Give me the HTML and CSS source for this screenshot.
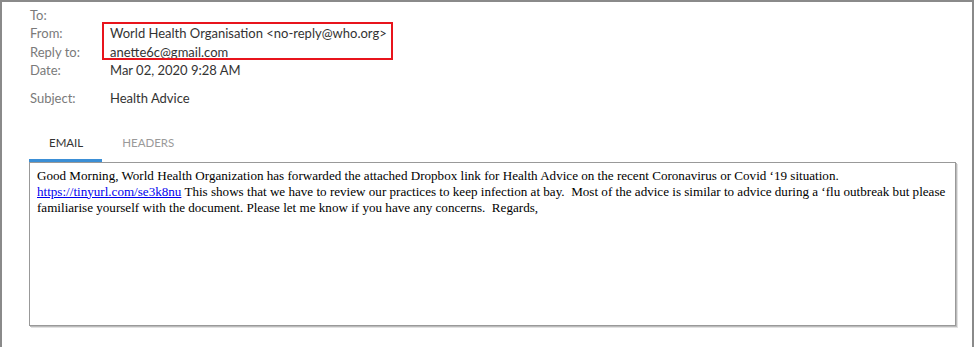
FILE: index.html
```html
<!DOCTYPE html>
<html lang="en">
<head>
    <meta charset="UTF-8">
    <title>Email</title>
    <link rel="stylesheet" href="styles.css">
</head>
<body>
<div class="frame">
    <!-- header fields -->
    <div class="meta">
        <span class="label r1">To:</span>
        <span class="value r1"></span>
        <span class="label r2">From:</span>
        <span class="value r2">World Health Organisation &lt;no-reply@who.org&gt;</span>
        <span class="label r3">Reply to:</span>
        <span class="value r3">anette6c@gmail.com</span>
        <div class="mark"></div>
        <span class="label r4">Date:</span>
        <span class="value r4">Mar 02, 2020 9:28 AM</span>
        <span class="label r5">Subject:</span>
        <span class="value r5">Health Advice</span>
    </div>
    <!-- tabs -->
    <nav class="tabs">
        <span class="tab active">EMAIL</span>
        <span class="tab">HEADERS</span>
    </nav>
    <!-- body -->
    <div class="message">Good Morning, World Health Organization has forwarded the attached Dropbox link for Health Advice on the recent Coronavirus or Covid ‘19 situation.<br><a href="#">https://tinyurl.com/se3k8nu</a> This shows that we have to review our practices to keep infection at bay.&nbsp; Most of the advice is similar to advice during a ‘flu outbreak but please familiarise yourself with the document. Please let me know if you have any concerns.&nbsp; Regards,</div>
</div>
</body>
</html>
```

FILE: styles.css
```css
* { margin: 0; padding: 0; box-sizing: border-box; }
html, body { width: 974px; height: 347px; background: #fff; overflow: hidden; }

.frame {
    width: 974px;
    height: 347px;
    border: 2px solid #8a8a8a;
    border-bottom: none;
    font-family: Lato, "Liberation Sans", sans-serif;
}

/* header fields */
.meta {
    display: grid;
    grid-template-columns: 80px 1fr;
    grid-template-rows: repeat(4, 18.5px) 28px;
    padding: 3.5px 0 0 28px;
    font-size: 13px;
    line-height: 18.5px;
}
.meta .label { color: #7a7a7a; grid-column: 1; }
.meta .value { color: #333; grid-column: 2; }
.meta .r1 { grid-row: 1; }
.meta .r2 { grid-row: 2; }
.meta .r3 { grid-row: 3; }
.meta .r4 { grid-row: 4; }
.meta .r5 { grid-row: 5; padding-top: 9.5px; }
.meta .mark {
    grid-column: 2;
    grid-row: 2 / 4;
    width: 291px;
    margin: -2px 0 1px -8px;
    border: 2px solid #e8141c;
}

/* tabs */
.tabs {
    display: flex;
    margin: 24px 0 0 27px;
    font-size: 11.5px;
    line-height: 14px;
}
.tabs .tab {
    padding: 4px 19px 9px 20px;
    color: #9a9a9a;
    border-bottom: 3px solid transparent;
}
.tabs .tab.active {
    color: #333;
    border-bottom-color: #3b8fd6;
}

/* body */
.message {
    width: 927px;
    height: 164px;
    margin-left: 27px;
    padding: 5px 7px;
    border: 1px solid #999;
    box-shadow: 1px 1px 0 #bbb, 2px 2px 0 #e2e2e2;
    font-family: "Liberation Serif", serif;
    font-size: 13.1px;
    line-height: 16px;
    color: #000;
}
.message a { color: #0000ee; }
```
